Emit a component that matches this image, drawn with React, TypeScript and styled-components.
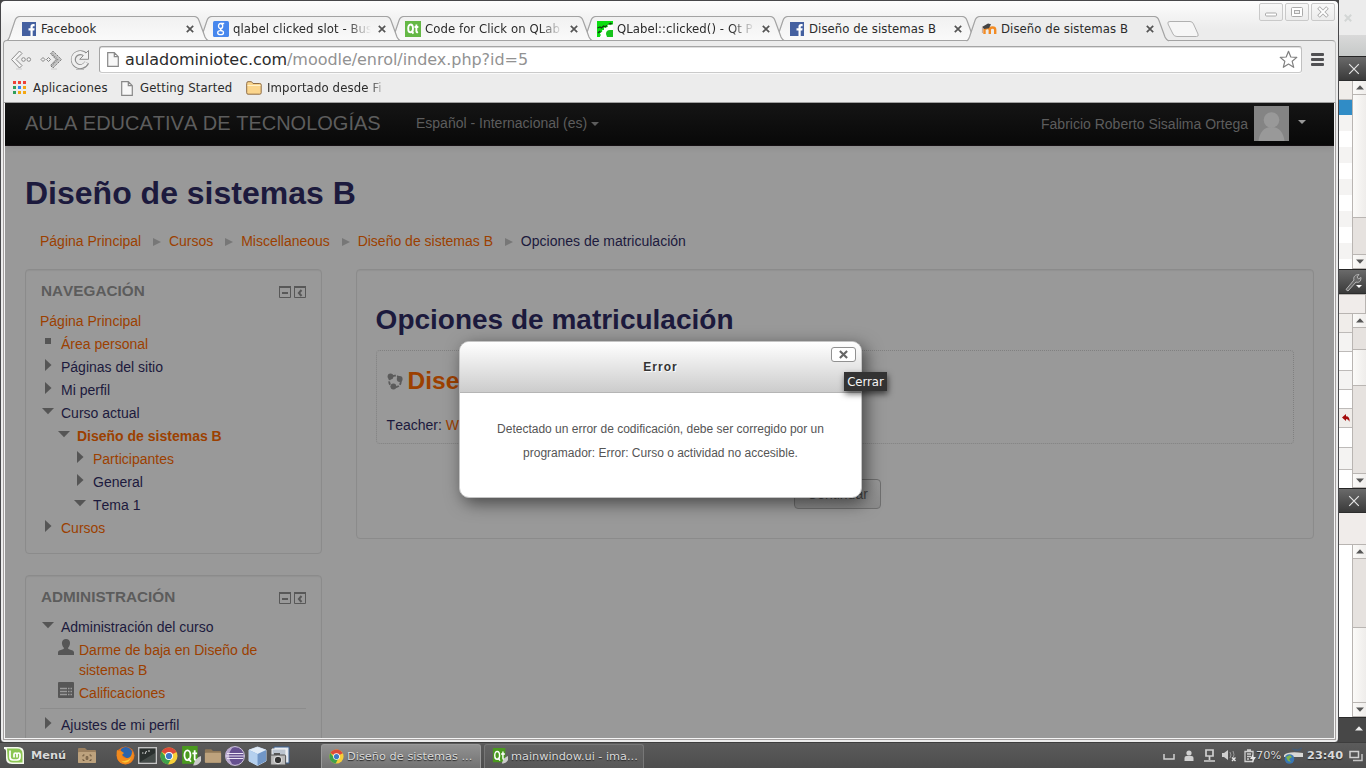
import React from "react";
import styled, { createGlobalStyle, css } from "styled-components";

const ui = '"DejaVu Sans Condensed", "DejaVu Sans", sans-serif';
const wide = '"DejaVu Sans", sans-serif';
const page = '"Liberation Sans", Arial, sans-serif';
const ink = "#1c1a3d";
const link = "#9c4000";

const GlobalStyle = createGlobalStyle`
  * { box-sizing: border-box; }
  body { margin: 0; overflow: hidden; background: #4b4b4b; }
  h1, h2, h3, p, ul { margin: 0; padding: 0; }
  button { font: inherit; padding: 0; }
  svg { display: block; flex: none; }
`;

const Desktop = styled.div`
  width: 1366px;
  height: 768px;
  display: flex;
  flex-direction: column;
  overflow: hidden;
`;
const Stage = styled.div`
  display: flex;
  height: 742px;
  background: #444;
`;

/* ---------- browser window ---------- */
const Browser = styled.div`
  position: relative;
  width: 1339px;
  height: 742px;
  display: flex;
  flex-direction: column;
  border: 1px solid #47474a;
  border-bottom: 0;
  border-radius: 5px 5px 4px 4px;
  background: linear-gradient(#fdfdfd, #ececec 28px);
  overflow: hidden;
`;
const TabStrip = styled.div`
  height: 39px;
  display: flex;
  padding: 15px 0 0 5px;
`;
const TabBox = styled.div<{ $level: number }>`
  position: relative;
  z-index: ${(p) => p.$level};
  width: 192px;
  height: 25px;
  display: flex;
  align-items: center;
  padding: 0 3px 0 15px;
`;
const TabShape = styled.svg`
  position: absolute;
  left: 0;
  top: 0;
`;
const TabIcon = styled.span`
  position: relative;
  margin-right: 4px;
`;
const TabTitle = styled.span<{ $w: number; $fade?: boolean }>`
  position: relative;
  width: ${(p) => p.$w}px;
  font: 13px/18px ${ui};
  letter-spacing: 0.06px;
  color: #2b2b2b;
  white-space: nowrap;
  overflow: hidden;
  ${(p) => p.$fade && css`mask-image: linear-gradient(90deg, #000 calc(100% - 24px), transparent);`}
`;
const TabClose = styled.svg`
  position: absolute;
  left: 180px;
  top: 9px;
`;
const NewTab = styled.svg`
  margin: 5px 0 0 9px;
`;
const WindowButtons = styled.div`
  display: flex;
  gap: 2px;
  margin: -13px 0 0 auto;
  padding-right: 3px;
`;
const WindowButton = styled.div`
  width: 24px;
  height: 18px;
  border: 1px solid #c9c9c9;
  border-radius: 2px;
  display: grid;
  place-items: center;
  background: linear-gradient(#f8f8f8, #ececec);
`;

const Chrome = styled.div`
  position: relative;
  z-index: 7;
  height: 63px;
  margin: 0 2px 0 2px;
  border: 1px solid #a3a3a3;
  border-bottom-color: #a0a0a0;
  border-radius: 4px 4px 0 0;
  border-right-color: #c4c4c4;
  background: #ececec;
`;
const ToolRow = styled.div`
  display: flex;
  align-items: center;
  height: 37px;
  padding: 0 11px 0 6px;
`;
const NavIcons = styled.div`
  display: flex;
  gap: 7px;
  width: 89px;
`;
const UrlBar = styled.div`
  flex: 1;
  height: 27px;
  display: flex;
  align-items: center;
  border: 1px solid #a5a5a5;
  border-bottom-color: #cacaca;
  border-right-color: #c0c0c0;
  border-radius: 3px;
  background: #fff;
  box-shadow: inset 0 1px 0 #dedede, 0 1px 0 #fafafa;
  padding: 0 3px 0 7px;
  font: 16px/24px ${wide};
  letter-spacing: -0.04px;
  color: #2b2b2b;
`;
const UrlText = styled.span`
  flex: 1;
  margin-left: 6px;
`;
const UrlPath = styled.span`
  color: #929292;
`;
const MenuBars = styled.div`
  width: 13px;
  margin-left: 9px;
  display: grid;
  gap: 2px;
`;
const MenuBar = styled.i`
  height: 3px;
  border-radius: 1px;
  background: #505053;
`;
const Bookmarks = styled.div`
  height: 20px;
  display: flex;
  align-items: center;
  padding-left: 9px;
  font: 13px/18px ${ui};
  letter-spacing: 0.13px;
  color: #2b2b2b;
`;
const Bookmark = styled.div<{ $gap: number; $w: number }>`
  display: flex;
  align-items: center;
  gap: ${(p) => p.$gap}px;
  width: ${(p) => p.$w}px;
  white-space: nowrap;
`;
const FadedLabel = styled.span`
  width: 119px;
  overflow: hidden;
  mask-image: linear-gradient(90deg, #000 86%, transparent);
`;

/* ---------- web page ---------- */
const Viewport = styled.main`
  width: 1329px;
  height: 635px;
  margin: 0 4px;
  background: #999;
  box-shadow: 0 0 0 1px #f4f4f4, 0 0 0 2px #a4a0a0;
  overflow: hidden;
  font: 14px/20px ${page};
  font-kerning: none;
  color: ${ink};
`;
const NavBar = styled.header`
  height: 43px;
  display: flex;
  align-items: center;
  padding: 0 27px 2px 20px;
  color: #5d5d5d;
  background: linear-gradient(#151515, #080808);
  border-bottom: 1px solid #140f12;
  box-shadow: 0 1px 7px rgba(0, 0, 0, 0.1);
`;
const Brand = styled.div`
  width: 391px;
  font-size: 20px;
`;
const Caret = styled.i<{ $bright?: boolean }>`
  display: inline-block;
  border: 4px solid transparent;
  border-top-color: ${(p) => (p.$bright ? "#999" : "#5d5d5d")};
  border-bottom: 0;
  margin: ${(p) => (p.$bright ? "0 1px 3px 3px" : "0 0 0 4px")};
  vertical-align: middle;
`;
const UserMenu = styled.div`
  margin-left: auto;
  display: flex;
  align-items: center;
  gap: 6px;
`;
const UserName = styled.span`
  padding-top: 2px;
`;
const CourseTitle = styled.h1`
  margin: 27px 20px 0;
  font-size: 32px;
  line-height: 40px;
`;
const Crumbs = styled.nav`
  display: flex;
  align-items: center;
  margin: 18px 35px 0;
`;
const Crumb = styled.span<{ $current?: boolean }>`
  color: ${(p) => (p.$current ? ink : link)};
`;
const CrumbArrow = styled.i`
  border: 4px solid transparent;
  border-left: 8px solid #777;
  border-right: 0;
  margin: 2px 7.8px 0 12px;
`;
const Columns = styled.div`
  display: flex;
  align-items: flex-start;
  gap: 34px;
  margin: 18px 20px 0;
`;
const Sidebar = styled.aside`
  width: 297px;
`;
const panel = css`
  border: 1px solid #8b8b8b;
  border-radius: 4px;
  box-shadow: inset 0 1px 1px rgba(0, 0, 0, 0.05);
`;
const Block = styled.section<{ $h: number }>`
  ${panel}
  height: ${(p) => p.$h}px;
  margin-bottom: 21px;
  padding: 11px 14px 0;
`;
const BlockHead = styled.div`
  display: flex;
  align-items: center;
  gap: 3px;
  height: 20px;
  padding: 0 1px;
  margin-bottom: 10px;
`;
const BlockTitle = styled.h2`
  flex: 1;
  font-size: 15.3px;
  line-height: 20px;
  color: #5c5c5c;
`;
const TreeRow = styled.div<{ $depth: number; $link?: boolean; $bold?: boolean }>`
  display: flex;
  margin-bottom: 3px;
  padding-left: ${(p) => p.$depth * 16}px;
  color: ${(p) => (p.$link ? link : ink)};
  font-weight: ${(p) => (p.$bold ? 700 : 400)};
`;
const Marker = styled.span`
  width: 21px;
  height: 20px;
  padding-left: 2px;
`;
const ItemIcon = styled.span`
  width: 21px;
  margin: -1px 0 0 2px;
`;
const Rule = styled.div`
  height: 1px;
  background: #8c8c8c;
  margin: 5px 1px 6px 0;
`;
const MainPanel = styled.section`
  ${panel}
  flex: 1;
  height: 270px;
  padding: 30px 19px 0;
`;
const PanelTitle = styled.h2`
  font-size: 28px;
  line-height: 40px;
  margin-left: -0.4px;
`;
const CourseBox = styled.div`
  height: 94px;
  margin: 10px 0 35px;
  border: 1px dotted #808080;
  border-radius: 4px;
  padding: 10px 10px 10px 9.6px;
`;
const CourseName = styled.h3`
  display: flex;
  align-items: center;
  gap: 5px;
  font-size: 24.5px;
  line-height: 40px;
  color: ${link};
`;
const Teacher = styled.p`
  margin-top: 14px;
`;
const TeacherLink = styled.a`
  color: ${link};
`;
const ContinueButton = styled.button`
  display: block;
  width: 87px;
  height: 30px;
  margin-left: 418px;
  border: 1px solid #6f6f6f;
  border-radius: 4px;
  color: #474747;
  background: linear-gradient(#999, #8a8a8a);
`;

/* ---------- modal ---------- */
const Dialog = styled.div`
  position: absolute;
  z-index: 9;
  left: 458px;
  top: 340px;
  width: 403px;
  height: 157px;
  border: 1px solid #c4c4c4;
  border-radius: 10px;
  background: #fff;
  box-shadow: 4px 5px 17px rgba(0, 0, 0, 0.55);
  font-family: ${page};
`;
const DialogHead = styled.div`
  height: 51px;
  border-bottom: 1px solid #b5b5b5;
  border-radius: 9px 9px 0 0;
  background: linear-gradient(#fff, #ccc);
  color: #333;
  font-size: 12px;
  font-weight: 700;
  line-height: 50px;
  letter-spacing: 1px;
  text-align: center;
  text-shadow: 1px 1px 1px #fff;
`;
const DialogText = styled.p`
  padding: 24px 30px;
  font-size: 12px;
  line-height: 24px;
  color: #555;
  text-align: center;
`;
const DialogClose = styled.div`
  position: absolute;
  right: 5px;
  top: 5px;
  width: 25px;
  height: 15px;
  display: grid;
  place-items: center;
  border: 1px solid #919191;
  border-radius: 3px;
  background: #fff;
`;
const Tooltip = styled.div`
  position: absolute;
  z-index: 10;
  left: 843px;
  top: 371px;
  width: 43px;
  height: 19px;
  background: #333;
  color: #f5f5f5;
  font: 13px/19px ${ui};
  text-align: center;
  box-shadow: 1px 3px 6px rgba(0, 0, 0, 0.6);
`;

/* ---------- editor docks showing at the right ---------- */
const Docks = styled.div`
  width: 27px;
  height: 742px;
  background: #fff;
`;
const BackTitle = styled.div`
  height: 56px;
  padding: 14px 0 0 5px;
  background: linear-gradient(#ececec 35px, #d9d9d9 35px, #c6c9c8);
`;
const DockHead = styled.div`
  height: 25px;
  display: grid;
  place-items: center;
  padding-left: 2px;
  border-top: 1px solid #252525;
  border-bottom: 1px solid #2c2c2c;
  background: linear-gradient(#6a6a6a, #3a3a3a);
`;
const DockBody = styled.div<{ $h: number }>`
  height: ${(p) => p.$h}px;
  display: flex;
`;
const RowStack = styled.div`
  width: 13px;
  overflow: hidden;
`;
const StackRow = styled.div<{ $h: number; $bg: string; $line?: boolean }>`
  height: ${(p) => p.$h}px;
  background: ${(p) => p.$bg};
  display: grid;
  place-items: center;
  ${(p) => p.$line && css`border-bottom: 1px solid #bdbab8;`}
`;
const ScrollBar = styled.div`
  width: 14px;
  display: flex;
  flex-direction: column;
  border-left: 1px solid #b9b5b2;
`;
const ScrollPart = styled.div<{ $h: number; $trough?: boolean }>`
  height: ${(p) => p.$h}px;
  display: grid;
  place-items: center;
  border-bottom: 1px solid #b9b5b2;
  background: ${(p) => (p.$trough ? "#e6e2df" : "linear-gradient(90deg,#fbfaf8,#efedeb)")};
`;
const Strip = styled.div<{ $h: number; $open?: boolean }>`
  height: ${(p) => p.$h}px;
  border: 1px solid #b8b4b1;
  border-left: 0;
  ${(p) => p.$open && css`border-right: 0; border-top: 0;`}
  background: #f0ecea;
`;
const DockFoot = styled.div`
  height: 25px;
  display: grid;
  place-items: center;
  padding: 0 0 4px 12px;
  border-top: 1px solid #2b2b2b;
  background: #474747;
`;

/* ---------- taskbar ---------- */
const Taskbar = styled.footer`
  height: 26px;
  display: flex;
  align-items: center;
  border-top: 1px solid #3d3d3d;
  background: linear-gradient(#5b5b5b, #4d4d4d);
  color: #dadada;
  font: 11.33px/16px ${wide};
  text-shadow: 0 1px 1px #222;
  padding: 0 3px 0 4px;
`;
const MenuLabel = styled.b`
  width: 46px;
  margin-left: 6px;
  padding-bottom: 2px;
`;
const Launchers = styled.div`
  display: flex;
  align-items: center;
  gap: 3px;
  width: 205px;
  margin-left: 19px;
`;
const Task = styled.div<{ $active?: boolean }>`
  width: 160px;
  height: 24px;
  margin: 1px 3px 0 0;
  display: flex;
  align-items: center;
  gap: 3px;
  padding: 0 0 1px 7px;
  letter-spacing: ${(p) => (p.$active ? "0.02px" : "-0.03px")};
  border: 1px solid ${(p) => (p.$active ? "#9a9a9a" : "#777")};
  border-bottom: 0;
  border-radius: 3px 3px 0 0;
  white-space: nowrap;
  background: ${(p) => (p.$active ? "linear-gradient(#919191,#727272)" : "linear-gradient(#646464,#585858)")};
`;
const Tray = styled.div`
  margin-left: auto;
  display: flex;
  align-items: center;
`;
const TrayItem = styled.span<{ $w: number; $text?: boolean }>`
  width: ${(p) => p.$w}px;
  ${(p) => p.$text && css`padding-bottom: 2px;`}
`;

/* ---------- icons ---------- */
const Cross = ({ size = 8, color = "#4a4a4a", w = 1.8 }) => (
  <svg width={size} height={size} viewBox="0 0 8 8">
    <path d="M.8.8l6.4 6.4M7.2.8L.8 7.2" stroke={color} strokeWidth={w} />
  </svg>
);
const FacebookIcon = () => (
  <svg width="16" height="16" viewBox="0 0 16 16">
    <rect x="1" y="1" width="14" height="14" fill="#4460a0" />
    <path d="M9.5 15V9.500H7.500V7.200h2V5.600C9.500 3.900 10.500 3 12.100 3h1.500v2.200h-1c-.7 0-.9.3-.9.9v1.100h1.900l-.3 2.300h-1.600V15z" fill="#fff" />
  </svg>
);
const GoogleIcon = () => (
  <svg width="16" height="16" viewBox="0 0 16 16">
    <rect width="16" height="16" rx="1.5" fill="#4787ed" />
    <g fill="none" stroke="#fff" strokeWidth="1.300">
      <ellipse cx="7.600" cy="5" rx="2.100" ry="2.500" />
      <path d="M8 2.500h3.200M9.200 7c-2.500 1.500-2 1.700-.2 3" />
      <ellipse cx="7.600" cy="11.700" rx="2.900" ry="2" />
    </g>
  </svg>
);
const QtIcon = ({ size = 16, brush = false }) => (
  <svg width={size} height={size} viewBox="0 0 18 18">
    <path d={brush ? "M1 0h14v16H1z" : "M0 0h18v18H0z"} fill={brush ? "#4a9a1f" : "#65b846"} />
    <g transform={brush ? undefined : "translate(.5 0)"} fill="none" stroke="#fff" strokeWidth={brush ? 1.6 : 2.1}>
      <ellipse cx="5.800" cy="8.300" rx="2.700" ry="4.400" />
      <path d="M6.500 11l2.500 3.200M12.300 3.800v7.700q0 1.500 1.900 1.100M10.200 6.700h4.300" />
    </g>
    {brush && <path d="M18 9c-3 1-6 4-7 8.500 4 0 6-2 7-4z" fill="#ccc" />}
  </svg>
);
const QtCentreIcon = () => (
  <svg width="16" height="16" viewBox="0 0 16 16">
    <path d="M0 0h16v4l-1.500-1-1 1.500L12 3l-1.500 1.500L11 6 8.500 7 7 6.500 7 9 5 9.500 5.500 11 3 12l1 2-1 2H0z" fill="#0bdd11" />
    <path d="M3 16l1-2-1-2 2.500-1L5 9.500 7 9V6.500L8.500 7 11 6l-.5-1.500L12 3l1.500 1.500 1-1.500L16 4v12z" fill="#fff" />
    <path d="M.5 7L3 6l1.500 1L6.500 5 8 5.800 10 4.500M1 12l1.500-1.500 1 1M11.500 3.500l2-1.300 1.500 1" fill="none" stroke="#123f12" strokeWidth="1.300" />
    <path d="M9 13q0-4 4-4h3v7h-6z" fill="#16c31b" />
  </svg>
);
const MoodleIcon = () => (
  <svg width="16" height="16" viewBox="0 0 16 16">
    <path d="M3.500 13V8M8.800 13V8.800c0-3 5.400-3 5.400 0V13M4 8.500c1-2 4.800-2 4.800.8V13" fill="none" stroke="#f28b24" strokeWidth="2.400" />
    <path d="M1 6l6-3.500 3 .8-2 4-5 .7z" fill="#444" />
    <path d="M1.400 6v6" stroke="#c7a999" />
  </svg>
);
const PageIcon = () => (
  <svg width="12" height="15" viewBox="0 0 12 15">
    <path d="M.7.7h6.600l4 4v9.600H.7zM7.300.7v4h4" fill="#f7f7f7" stroke="#888" strokeWidth="1.200" />
  </svg>
);
const BackIcon = () => (
  <svg width="23" height="22" viewBox="0 0 23 22">
    <path d="M1.500 10.500l8-8.500 2.500 2.500-6 6 6 6-2.500 2.500z" fill="#f4f4f4" stroke="#8a8a8a" />
    <circle cx="13.500" cy="10.500" r="1.800" fill="#f4f4f4" stroke="#8a8a8a" />
    <circle cx="18.800" cy="10.500" r="1.800" fill="#f4f4f4" stroke="#8a8a8a" />
    <path d="M6 20h6" stroke="#ccc" />
  </svg>
);
const ForwardIcon = () => (
  <svg width="23" height="22" viewBox="0 0 23 22">
    <path d="M21.500 10.500L13 2l-2.500 2.500 5.500 6-5.500 6L13 19z" fill="#c4c4c4" stroke="#777" strokeDasharray="1.500 1" />
    <path d="M11.500 4.500l6 6-6 6" fill="none" stroke="#8a8a8a" strokeWidth="1.500" strokeDasharray="1 1" />
    <path d="M1 10.500l2-2 2 2-2 2zM6.500 10.500l2-2 2 2-2 2z" fill="#eee" stroke="#777" strokeWidth=".9" />
    <path d="M11 20h6" stroke="#ccc" />
  </svg>
);
const ReloadIcon = () => (
  <svg width="22" height="22" viewBox="0 0 22 22">
    <path d="M16.800 13.500A7 7 0 1 1 15.600 6" fill="none" stroke="#8d8d8d" strokeWidth="5" />
    <path d="M18.500 1.500v8.800h-8.800z" fill="#f2f2f2" stroke="#8d8d8d" />
    <path d="M16.400 13.500A7 7 0 1 1 15.600 6.200" fill="none" stroke="#f0f0f0" strokeWidth="3.200" />
    <path d="M6 20.500h8" stroke="#bbb" />
  </svg>
);
const StarIcon = () => (
  <svg width="19" height="19" viewBox="0 0 19 19">
    <path d="M9.500 1.300l2.300 5.700 6 .4-4.600 3.900 1.500 6-5.200-3.300-5.200 3.300 1.500-6L1.200 7.400l6-.4z" fill="#fff" stroke="#808080" strokeWidth="1.200" strokeLinejoin="round" />
  </svg>
);
const AppsIcon = () => (
  <svg width="14" height="14" viewBox="0 0 14 14">
    {["#ee4035", "#ee4035", "#ee4035", "#2f9e5b", "#3384f0", "#f4a712", "#2f9e5b", "#f4a712", "#f4a712"].map((c, i) => (
      <rect key={i} x={(i % 3) * 5} y={Math.floor(i / 3) * 5} width="3" height="3" fill={c} />
    ))}
  </svg>
);
const FolderIcon = () => (
  <svg width="16" height="14" viewBox="0 0 16 14">
    <path d="M.7 2.500Q.7.700 2 .7h3.500L7 2.500h6.800q1.400 0 1.400 1.300v8q0 1.400-1.400 1.400H2q-1.300 0-1.300-1.400z" fill="#fbd58c" stroke="#8e6c45" />
    <path d="M1.500 4.500h13" stroke="#fff1c9" />
  </svg>
);
const BlockTools = () => (
  <svg width="28" height="14" viewBox="0 0 28 14">
    <g fill="none" stroke="#585858">
      <path d="M1.500 3v10.500h11V3M16.500 3v10.500h11V3" />
      <path d="M1 3h12M16 3h12" strokeWidth="2" />
      <path d="M4 9h6M23.500 6l-2.600 3 2.600 3" strokeWidth="2" />
    </g>
  </svg>
);
type Mark = "right" | "down" | "dot" | "none";
const TreeMark = ({ kind }: { kind: Mark }) => (
  <svg width="12" height="16" viewBox="0 0 12 16">
    {kind === "right" && <path d="M3 2l6.500 6L3 14z" fill="#555" />}
    {kind === "down" && <path d="M0 5h12l-6 6.200z" fill="#555" />}
    {kind === "dot" && <rect x="3" y="4" width="6" height="6" fill="#555" />}
  </svg>
);
const PersonIcon = () => (
  <svg width="16" height="17" viewBox="0 0 16 17">
    <path d="M8 0c5 0 5 6 2 9 0 2 6 1.500 6 4.500V16H0v-2.500C0 10.500 6 11 6 9 3 6 3 0 8 0z" fill="#565656" />
  </svg>
);
const GradesIcon = () => (
  <svg width="16" height="16" viewBox="0 0 16 16">
    <rect width="16" height="16" rx="1" fill="#565656" />
    <path d="M2 6.500h7M2 9.500h7M2 12.500h7M10 6.500h1.500M10 9.500h1.500M10 12.500h1.500M12.500 6.500H14M12.500 9.500H14M12.500 12.500H14" stroke="#999" strokeWidth="1.500" />
  </svg>
);
const CourseIcon = () => (
  <svg width="16" height="18" viewBox="0 0 16 18">
    <circle cx="8" cy="9.500" r="5.800" fill="none" stroke="#5b5b5b" strokeWidth="1.800" strokeDasharray="3.500 1.300" />
    <circle cx="3.500" cy="4.500" r="2.900" fill="#5b5b5b" />
    <circle cx="12.700" cy="7" r="2.900" fill="#5b5b5b" />
    <circle cx="6.400" cy="14.500" r="2.900" fill="#5b5b5b" />
  </svg>
);
const Avatar = () => (
  <svg width="35" height="35" viewBox="0 0 35 35">
    <rect width="35" height="35" fill="#848484" />
    <circle cx="17.500" cy="14" r="7.800" fill="#999" />
    <path d="M4.500 35c1-8 5-14 13-14s12 6 13 14z" fill="#999" />
  </svg>
);
const Wrench = () => (
  <svg width="20" height="20" viewBox="0 0 20 20">
    <path d="M2 17.500L10 8c-1-3 1-5.500 5-5.500L13 5l1.500 2L17 5.500c0 4-2 5.500-5 4.500L4 19z" fill="#666" stroke="#b5b5b5" />
    <path d="M12 13h6l-3 3z" fill="#fff" />
  </svg>
);
const Arrow = ({ up = false, color = "#555" }) => (
  <svg width="8" height="5" viewBox="0 0 8 5">
    <path d={up ? "M0 4.500L4 .3l4 4.200z" : "M0 .5l4 4.200L8 .5z"} fill={color} />
  </svg>
);
const ChromeIcon = ({ size = 18 }) => (
  <svg width={size} height={size} viewBox="0 0 18 18">
    <circle cx="9" cy="9" r="8.500" fill="#f7cf3a" />
    <path d="M9 9L1.600 4.800A8.500 8.500 0 0 1 16.500 5z" fill="#dd4a3a" />
    <path d="M9 9H5L1.600 4.800A8.500 8.500 0 0 0 8 17.500L12 10z" fill="#3fa14b" />
    <circle cx="9" cy="9" r="4" fill="#fff" />
    <circle cx="9" cy="9" r="3.100" fill="#3f78c5" />
  </svg>
);
const MintIcon = () => (
  <svg width="21" height="19" viewBox="0 0 21 19">
    <path d="M0 1h14q6 0 6 6v11H8q-6 0-6-6V5Q2 3 0 3z" fill="#f4f8ee" />
    <path d="M3 2.500h10q5.500 0 5.500 5.500v8.500H9q-5.500 0-5.500-6z" fill="#8bc653" />
    <path d="M6 4.500v6.500q0 3 3 3h4q3 0 3-3V8.500q0-1.500-1.500-1.500T13 8.500v3M13 8.500Q13 7 11.500 7T10 8.500v3" fill="none" stroke="#fff" strokeWidth="1.700" />
  </svg>
);
const TaskFolder = ({ shot = false }) => (
  <svg width={shot ? 20 : 18} height={shot ? 17 : 16} viewBox="0 0 20 17">
    <path d="M1 2q0-1 1-1h6l2 2h8q1 0 1 1v11q0 1-1 1H2q-1 0-1-1z" fill={shot ? "#9b805f" : "#8f7757"} />
    <path d="M1 6q0-1 1-1h16q1 0 1 1v9q0 1-1 1H2q-1 0-1-1z" fill="#bda27d" />
    {shot && <path d="M6 9.500V8h1.500M12.500 8H14v1.500M6 12v1.500h1.500M12.500 13.500H14V12M9.200 9.700h1.600v2.600H9.200z" fill="none" stroke="#6b563d" />}
  </svg>
);
const FirefoxIcon = () => (
  <svg width="19" height="19" viewBox="0 0 19 19">
    <circle cx="9.500" cy="9.500" r="9" fill="#e8701a" />
    <path d="M5 3Q10-1 15 3.500q3 4 0 8-4 2-7-1-4-2-3-7.500z" fill="#2b64ac" />
    <path d="M1 4q2 1 4 1l3 2-2 2q1 4 6 3 4-1 4-7 3 4 1 8t-6 5q-6 1-9-4-2-5-1-10z" fill="#f08a1d" />
    <path d="M3 13q5 5 12-1-3 6-8 4z" fill="#fbc836" />
  </svg>
);
const TerminalIcon = () => (
  <svg width="19" height="17" viewBox="0 0 19 17">
    <rect x=".7" y=".7" width="17.600" height="15.600" fill="#2a302e" stroke="#c4c4c4" strokeWidth="1.400" />
    <path d="M4 6h1.500M7 7l1.500-3M10 4h2" stroke="#ddd" />
    <path d="M2 15L17 6v9z" fill="#454c49" />
  </svg>
);
const EclipseIcon = () => (
  <svg width="20" height="20" viewBox="0 0 20 20">
    <circle cx="10" cy="10" r="9.400" fill="#66518f" stroke="#d5cbe2" />
    <path d="M8 1q-8 9 0 18-7-1-7.500-9T8 1z" fill="#b9a9cf" />
    <path d="M2 7.500h16M1 10h18M2 12.500h16" stroke="#ece6f4" />
  </svg>
);
const BoxIcon = () => (
  <svg width="19" height="20" viewBox="0 0 19 20">
    <path d="M9.500 1l8.500 3v11l-8.500 4.500L1 15V4z" fill="#7ba5d8" stroke="#c9d9ec" />
    <path d="M9.500 8L18 4v11l-8.500 4.500z" fill="#7196c6" />
    <path d="M9.500 1L18 4 9.500 8 1 4z" fill="#e1ebf6" />
    <path d="M1 4l8.500 4v11.500L1 15z" fill="#b5d0ee" />
  </svg>
);
const CameraIcon = () => (
  <svg width="20" height="20" viewBox="0 0 20 20">
    <path d="M4 1h15v16H4z" fill="#e2e7ee" stroke="#3f6595" />
    <path d="M2 3h14v7H2z" fill="#bcc5d0" stroke="#f2f2f2" />
    <rect x=".6" y="9" width="15" height="10" rx="1" fill="#b9b9b9" stroke="#555" />
    <path d="M4 9V7h6v2" fill="#555" />
    <circle cx="8" cy="14" r="3.800" fill="#333" stroke="#eee" />
  </svg>
);

/* ---------- data ---------- */
const tabs = [
  { title: "Facebook", icon: <FacebookIcon /> },
  { title: "qlabel clicked slot - Bus", icon: <GoogleIcon />, fade: true },
  { title: "Code for Click on QLab", icon: <QtIcon />, fade: true },
  { title: "QLabel::clicked() - Qt P", icon: <QtCentreIcon />, fade: true },
  { title: "Diseño de sistemas B", icon: <FacebookIcon /> },
  { title: "Diseño de sistemas B", icon: <MoodleIcon />, active: true },
];
const crumbs = ["Página Principal", "Cursos", "Miscellaneous", "Diseño de sistemas B"];
const tree: { t: string; d: number; m: Mark; link?: boolean; bold?: boolean }[] = [
  { t: "Área personal", d: 0, m: "dot", link: true },
  { t: "Páginas del sitio", d: 0, m: "right" },
  { t: "Mi perfil", d: 0, m: "right" },
  { t: "Curso actual", d: 0, m: "down" },
  { t: "Diseño de sistemas B", d: 1, m: "down", link: true, bold: true },
  { t: "Participantes", d: 2, m: "right", link: true },
  { t: "General", d: 2, m: "right" },
  { t: "Tema 1", d: 2, m: "down" },
  { t: "Cursos", d: 0, m: "right", link: true },
];

const TreeItem = ({ t, d, m, link: isLink, bold }: (typeof tree)[number]) => (
  <TreeRow $depth={d} $link={isLink} $bold={bold}>
    <Marker><TreeMark kind={m} /></Marker>
    {t}
  </TreeRow>
);

const BlockHeader = ({ title }: { title: string }) => (
  <BlockHead>
    <BlockTitle>{title}</BlockTitle>
    <BlockTools />
  </BlockHead>
);

const Scroll = ({ parts }: { parts: [number, boolean][] }) => (
  <ScrollBar>
    <ScrollPart $h={14}><Arrow up /></ScrollPart>
    {parts.map(([h, trough], i) => <ScrollPart key={i} $h={h} $trough={trough} />)}
    <ScrollPart $h={14}><Arrow /></ScrollPart>
  </ScrollBar>
);

export default function App() {
  return (
    <Desktop>
      <GlobalStyle />
      <Stage>
        <Browser>
          <TabStrip>
            {tabs.map((t, i) => (
              <TabBox key={i} $level={t.active ? 8 : 6 - i}>
                <TabShape width="208" height="26" viewBox="0 0 208 26">
                  <defs>
                    <linearGradient id="idle" x1="0" y1="0" x2="0" y2="1">
                      <stop offset="0" stopColor="#f1f1f1" />
                      <stop offset="1" stopColor="#fafafa" />
                    </linearGradient>
                  </defs>
                  <path
                    d="M.5 25c2-1 2-2 3-4L9 4.500Q10.500.5 14 .5H188q3.500 0 5 4l6 16.500c1 2 1.500 3.500 4 4"
                    fill={t.active ? "#ececec" : "url(#idle)"}
                    stroke="#a3a3a3"
                    strokeWidth="1.200"
                  />
                </TabShape>
                <TabIcon>{t.icon}</TabIcon>
                <TabTitle $w={138} $fade={t.fade}>{t.title}</TabTitle>
                <TabClose width="8" height="8" viewBox="0 0 8 8">
                  <path d="M.8.8l6.400 6.400M7.200.8L.8 7.200" stroke="#555" strokeWidth="1.700" />
                </TabClose>
              </TabBox>
            ))}
            <NewTab width="34" height="17" viewBox="0 0 34 17">
              <path d="M1 3q-1-2.500 2-2.500h20q2.500 0 3.500 2.500l4.500 10q1 2.500-1.500 2.500H10q-3 0-4-2.500z" fill="#f6f6f6" stroke="#b0b0b0" />
            </NewTab>
            <WindowButtons>
              <WindowButton>
                <svg width="12" height="12"><rect x=".5" y="7" width="11" height="3" rx="1" fill="#fff" stroke="#aaa" /></svg>
              </WindowButton>
              <WindowButton>
                <svg width="12" height="12"><rect x=".5" y="1.500" width="11" height="9" rx="1" fill="#fff" stroke="#aaa" /><rect x="3.500" y="4.500" width="5" height="3" fill="#eee" stroke="#aaa" /></svg>
              </WindowButton>
              <WindowButton>
                <svg width="12" height="12"><path d="M1.500 1.500l9 9M10.500 1.500l-9 9" stroke="#aaa" strokeWidth="3.600" /><path d="M2 2l8 8M10 2l-8 8" stroke="#fff" strokeWidth="1.800" /></svg>
              </WindowButton>
            </WindowButtons>
          </TabStrip>
          <Chrome>
            <ToolRow>
              <NavIcons>
                <BackIcon />
                <ForwardIcon />
                <ReloadIcon />
              </NavIcons>
              <UrlBar>
                <PageIcon />
                <UrlText>auladominiotec.com<UrlPath>/moodle/enrol/index.php?id=5</UrlPath></UrlText>
                <StarIcon />
              </UrlBar>
              <MenuBars><MenuBar /><MenuBar /><MenuBar /></MenuBars>
            </ToolRow>
            <Bookmarks>
              <Bookmark $gap={6} $w={108}><AppsIcon />Aplicaciones</Bookmark>
              <Bookmark $gap={7} $w={125}><PageIcon />Getting Started</Bookmark>
              <Bookmark $gap={5} $w={150}><FolderIcon /><FadedLabel>Importado desde Fi</FadedLabel></Bookmark>
            </Bookmarks>
          </Chrome>
          <Viewport>
            <NavBar>
              <Brand>AULA EDUCATIVA DE TECNOLOGÍAS</Brand>
              <span>Español - Internacional (es)<Caret /></span>
              <UserMenu>
                <UserName>Fabricio Roberto Sisalima Ortega</UserName>
                <Avatar />
                <Caret $bright />
              </UserMenu>
            </NavBar>
            <CourseTitle>Diseño de sistemas B</CourseTitle>
            <Crumbs>
              {crumbs.map((c) => (
                <React.Fragment key={c}>
                  <Crumb>{c}</Crumb>
                  <CrumbArrow />
                </React.Fragment>
              ))}
              <Crumb $current>Opciones de matriculación</Crumb>
            </Crumbs>
            <Columns>
              <Sidebar>
                <Block $h={285}>
                  <BlockHeader title="NAVEGACIÓN" />
                  <TreeRow $depth={0} $link>Página Principal</TreeRow>
                  {tree.map((r) => <TreeItem key={r.t} {...r} />)}
                </Block>
                <Block $h={260}>
                  <BlockHeader title="ADMINISTRACIÓN" />
                  <TreeItem t="Administración del curso" d={0} m="down" />
                  <TreeRow $depth={1} $link><ItemIcon><PersonIcon /></ItemIcon>Darme de baja en Diseño de<br />sistemas B</TreeRow>
                  <TreeRow $depth={1} $link><ItemIcon><GradesIcon /></ItemIcon>Calificaciones</TreeRow>
                  <Rule />
                  <TreeItem t="Ajustes de mi perfil" d={0} m="right" />
                </Block>
              </Sidebar>
              <MainPanel>
                <PanelTitle>Opciones de matriculación</PanelTitle>
                <CourseBox>
                  <CourseName><CourseIcon />Dise</CourseName>
                  <Teacher>Teacher: <TeacherLink>W</TeacherLink></Teacher>
                </CourseBox>
                <ContinueButton>Continuar</ContinueButton>
              </MainPanel>
            </Columns>
          </Viewport>
          <Dialog>
            <DialogHead>Error</DialogHead>
            <DialogText>Detectado un error de codificación, debe ser corregido por un programador: Error: Curso o actividad no accesible.</DialogText>
            <DialogClose><Cross size={9} color="#666" w={1.9} /></DialogClose>
          </Dialog>
          <Tooltip>Cerrar</Tooltip>
        </Browser>
        <Docks>
          <BackTitle><Cross size={8} color="#d3d6d5" w={2} /></BackTitle>
          <DockHead><Cross size={12} color="#e4e4e4" w={0.8} /></DockHead>
          <DockBody $h={188}>
            <RowStack>
              <StackRow $h={19} $bg="#f0edea" $line />
              <StackRow $h={15} $bg="#308cc6" />
              {Array.from({ length: 10 }, (_, i) => <StackRow key={i} $h={16} $bg={i % 2 ? "#fff" : "#f4f3f2"} />)}
            </RowStack>
            <Scroll parts={[[124, false], [37, true]]} />
          </DockBody>
          <DockHead><Wrench /></DockHead>
          <Strip $h={20} />
          <DockBody $h={174}>
            <RowStack>
              <StackRow $h={19} $bg="#f0edea" $line />
              <StackRow $h={19} $bg="#f4f3f2" $line />
              <StackRow $h={19} $bg="#fff" $line />
              <StackRow $h={19} $bg="#f4f3f2" $line />
              <StackRow $h={19} $bg="#fff" $line />
              <StackRow $h={19} $bg="#f0edea" $line>
                <svg width="8" height="8"><path d="M0 3.500L4 0v2.200q4 0 3.500 5.500Q6.500 5 4 5v2z" fill="#a40a0a" /></svg>
              </StackRow>
              <StackRow $h={20} $bg="#fff" $line />
              <StackRow $h={22} $bg="#f4f3f2" $line />
              <StackRow $h={18} $bg="#fff" />
            </RowStack>
            <Scroll parts={[[22, true], [36, false], [89, true]]} />
          </DockBody>
          <DockHead><Cross size={12} color="#e4e4e4" w={0.8} /></DockHead>
          <Strip $h={32} $open />
          <DockBody $h={172}>
            <RowStack />
            <Scroll parts={[[69, true], [76, false]]} />
          </DockBody>
          <DockFoot><Arrow up color="#eee" /></DockFoot>
        </Docks>
      </Stage>
      <Taskbar>
        <MintIcon />
        <MenuLabel>Menú</MenuLabel>
        <TaskFolder shot />
        <Launchers>
          <FirefoxIcon />
          <TerminalIcon />
          <ChromeIcon />
          <QtIcon size={20} brush />
          <TaskFolder />
          <EclipseIcon />
          <BoxIcon />
          <CameraIcon />
        </Launchers>
        <Task $active><ChromeIcon size={15} />Diseño de sistemas ...</Task>
        <Task><QtIcon size={16} brush />mainwindow.ui - ima...</Task>
        <Tray>
          <TrayItem $w={21}><svg width="12" height="10"><path d="M1 3v5h10V3" fill="none" stroke="#d0d0d0" strokeWidth="1.500" /></svg></TrayItem>
          <TrayItem $w={20}><svg width="10" height="12"><circle cx="5" cy="3" r="2.600" fill="#d0d0d0" /><path d="M.5 11V8q0-2 2-2h5q2 0 2 2v3z" fill="#d0d0d0" /></svg></TrayItem>
          <TrayItem $w={18}><svg width="11" height="13"><path d="M2 1h7v6H2zM5.500 7v4M0 12h11" fill="none" stroke="#d0d0d0" strokeWidth="1.700" /></svg></TrayItem>
          <TrayItem $w={22}><svg width="15" height="13"><path d="M0 4h2l4-3v10l-4-3H0z" fill="#d0d0d0" /><path d="M8 3q2 3 0 6M11 2q2 4 0 7" fill="none" stroke="#999" /><path d="M10 8.500l3.500 3.500M13.500 8.500L10 12" stroke="#e5e5e5" strokeWidth="1.400" /></svg></TrayItem>
          <TrayItem $w={12}><svg width="12" height="14"><path d="M1 2.500h8v10H1zM3 1h4M3 5h4M3 7.500h4M3 10h2" fill="none" stroke="#d0d0d0" strokeWidth="1.300" /><path d="M9 5l-3 5h3l-1 4 4-6H9z" fill="#e8e8e8" /></svg></TrayItem>
          <TrayItem $w={28} $text>70%</TrayItem>
          <TrayItem $w={23}><svg width="20" height="18"><path d="M0 8q4-4 19-2v4H0z" fill="#d8d8d5" /><path d="M8 2q6 2 10-1M10 4l7-1" fill="none" stroke="#415d7b" /><circle cx="5.500" cy="12" r="4.800" fill="#3976b4" /><path d="M2 10l4-2 2 2-3 2 2 3-3-1z" fill="#7db34a" /></svg></TrayItem>
          <TrayItem $w={42} $text><b>23:40</b></TrayItem>
          <TrayItem $w={14}><svg width="14" height="12"><path d="M4 10.500h9V4" fill="none" stroke="#c4c4c4" strokeWidth="1.500" /><rect x="1" y="1.500" width="8.500" height="6" fill="none" stroke="#d0d0d0" strokeWidth="1.500" /></svg></TrayItem>
        </Tray>
      </Taskbar>
    </Desktop>
  );
}
